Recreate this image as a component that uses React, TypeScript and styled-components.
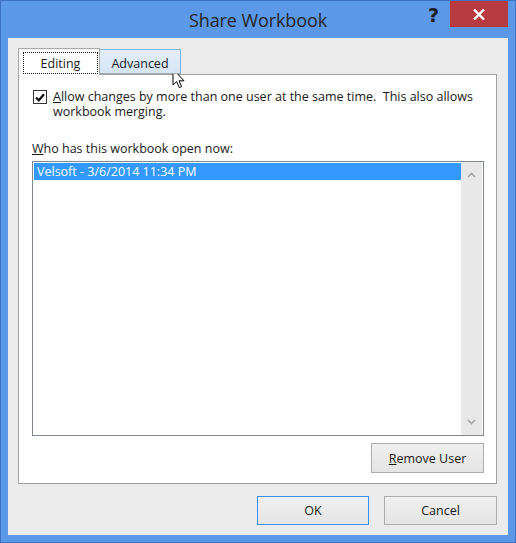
import React from "react";
import styled, { createGlobalStyle } from "styled-components";

const GlobalStyle = createGlobalStyle`
  html, body { margin: 0; padding: 0; background: #5b98e8; }
  body { font-family: "Open Sans", "Noto Sans", sans-serif; }
`;

const Window = styled.div`
  position: relative;
  width: 516px;
  height: 543px;
  box-sizing: border-box;
  background: #5b98e8;
  border: 1px solid #3e72c4;
  display: flex;
  flex-direction: column;
`;

const TitleBar = styled.div`
  position: relative;
  height: 37px;
  flex: none;
  display: flex;
  align-items: center;
  justify-content: center;
`;

const Title = styled.div`
  font-family: "Open Sans", sans-serif;
  font-size: 18px;
  color: #262626;
  letter-spacing: -0.1px;
`;

const Controls = styled.div`
  position: absolute;
  top: 0;
  right: 7px;
  display: flex;
  align-items: flex-start;
  gap: 11px;
`;

const HelpButton = styled.div`
  font-family: "DejaVu Sans", sans-serif;
  font-weight: bold;
  font-size: 19px;
  line-height: 1;
  color: #1e1e1e;
  margin-top: 5px;
`;

const CloseButton = styled.div`
  width: 58px;
  height: 26px;
  background: #b83b42;
  display: flex;
  align-items: center;
  justify-content: center;
`;

const Client = styled.div`
  flex: 1;
  margin: 0 7px 7px 7px;
  background: #ececec;
  padding: 9px 11px 0 10px;
  display: flex;
  flex-direction: column;
  font-size: 12.5px;
  color: #1a1a1a;
`;

const TabRow = styled.div`
  display: flex;
  align-items: flex-end;
  height: 27px;
  position: relative;
  z-index: 1;
`;

const Tab = styled.div<{ $active?: boolean; $hover?: boolean; $w: number }>`
  box-sizing: border-box;
  width: ${(p) => p.$w}px;
  height: ${(p) => (p.$active ? "27px" : "25px")};
  margin-bottom: ${(p) => (p.$active ? "-1px" : "0")};
  padding: ${(p) => (p.$active ? "0 0 0 4px" : "3px 0 0 0")};
  display: flex;
  align-items: ${(p) => (p.$active ? "flex-start" : "center")};
  justify-content: ${(p) => (p.$active ? "flex-start" : "center")};
  background: ${(p) =>
    p.$active ? "#ffffff" : p.$hover ? "linear-gradient(#e4eefa, #d5e5f7)" : "#f0f0f0"};
  border: 1px solid ${(p) => (p.$active ? "#a8a8a8" : p.$hover ? "#7eb4ea" : "#acacac")};
  border-bottom: ${(p) => (p.$active ? "none" : "1px solid #a8a8a8")};
  border-left: ${(p) => (p.$hover ? "none" : undefined)};
  color: #1a1a1a;
`;

const FocusRect = styled.div`
  box-sizing: border-box;
  border: 1px dotted #1a1a1a;
  width: 75px;
  height: 22px;
  margin-top: 3px;
  display: flex;
  align-items: center;
  justify-content: center;
`;

const Panel = styled.div`
  box-sizing: border-box;
  height: 410px;
  flex: none;
  background: #ffffff;
  border: 1px solid #a0a0a0;
  padding: 14px 12px 0 13px;
  display: flex;
  flex-direction: column;
`;

const CheckRow = styled.div`
  display: flex;
  align-items: flex-start;
  padding-left: 1px;
`;

const CheckBox = styled.div`
  flex: none;
  box-sizing: border-box;
  width: 14px;
  height: 14px;
  border: 1px solid #333333;
  background: #ffffff;
  display: flex;
  align-items: center;
  justify-content: center;
  margin-top: 1px;
`;

const CheckText = styled.div`
  margin-left: 6px;
  line-height: 15px;
  width: 428px;
  &::first-letter {
    text-decoration: underline;
  }
`;

const U = styled.span`
  text-decoration: underline;
  text-underline-offset: 1px;
`;

const ListLabel = styled.div`
  margin-top: 22px;
  line-height: 15px;
  &::first-letter {
    text-decoration: underline;
  }
`;

const ListBox = styled.div`
  box-sizing: border-box;
  flex: none;
  margin-top: 5px;
  height: 275px;
  border: 1px solid #828790;
  padding: 1px;
  display: flex;
`;

const ListItems = styled.div`
  flex: 1;
`;

const ListItem = styled.div<{ $selected?: boolean }>`
  height: 17px;
  line-height: 17px;
  padding-left: 3px;
  background: ${(p) => (p.$selected ? "#3399ff" : "transparent")};
  color: ${(p) => (p.$selected ? "#ffffff" : "#1a1a1a")};
`;

const ScrollBar = styled.div`
  width: 21px;
  margin: -1px 0;
  background: #e8e8e8;
  display: flex;
  flex-direction: column;
  justify-content: space-between;
  align-items: center;
  padding: 10px 0 10px;
`;

const ButtonRow = styled.div<{ $gap?: number }>`
  display: flex;
  justify-content: flex-end;
  gap: ${(p) => p.$gap ?? 0}px;
`;

const Button = styled.div<{ $default?: boolean; $w: number; $h: number }>`
  box-sizing: border-box;
  width: ${(p) => p.$w}px;
  height: ${(p) => p.$h}px;
  border: 1px solid ${(p) => (p.$default ? "#3c8ef0" : "#acacac")};
  background: linear-gradient(#f0f0f0, #e5e5e5);
  display: flex;
  align-items: center;
  justify-content: center;
  color: #1a1a1a;
`;

const Footer = styled(ButtonRow)`
  margin-top: 12px;
`;

const RemoveRow = styled(ButtonRow)`
  margin-top: 7px;
`;

const Cursor = styled.svg`
  position: absolute;
  left: 171px;
  top: 67px;
`;

export default function App() {
  return (
    <>
      <GlobalStyle />
      <Window>
        <TitleBar>
          <Title>Share Workbook</Title>
          <Controls>
            <HelpButton>?</HelpButton>
            <CloseButton>
              <svg width="12" height="11" viewBox="0 0 12 11">
                <path d="M1 0.5 L11 10.5 M11 0.5 L1 10.5" stroke="#ffffff" strokeWidth="2.4" />
              </svg>
            </CloseButton>
          </Controls>
        </TitleBar>
        <Client>
          <TabRow>
            <Tab $active $w={82}>
              <FocusRect>Editing</FocusRect>
            </Tab>
            <Tab $hover $w={81}>Advanced</Tab>
          </TabRow>
          <Panel>
            <CheckRow>
              <CheckBox>
                <svg width="10" height="9" viewBox="0 0 10 9">
                  <path d="M1 4.5 L3.8 7.3 L9 1.2" fill="none" stroke="#111" strokeWidth="2.2" />
                </svg>
              </CheckBox>
              <CheckText>
                Allow changes by more than one user at the same time.&nbsp; This also allows
                workbook merging.
              </CheckText>
            </CheckRow>
            <ListLabel>Who has this workbook open now:</ListLabel>
            <ListBox>
              <ListItems>
                <ListItem $selected>Velsoft - 3/6/2014 11:34 PM</ListItem>
              </ListItems>
              <ScrollBar>
                <svg width="9" height="6" viewBox="0 0 9 6">
                  <path d="M1 5 L4.5 1.5 L8 5" fill="none" stroke="#a6a6a6" strokeWidth="1.6" />
                </svg>
                <svg width="9" height="6" viewBox="0 0 9 6">
                  <path d="M1 1 L4.5 4.5 L8 1" fill="none" stroke="#a6a6a6" strokeWidth="1.6" />
                </svg>
              </ScrollBar>
            </ListBox>
            <RemoveRow>
              <Button $w={113} $h={30}>
                <span>
                  <U>R</U>emove User
                </span>
              </Button>
            </RemoveRow>
          </Panel>
          <Footer $gap={15}>
            <Button $default $w={112} $h={29}>OK</Button>
            <Button $w={113} $h={29}>Cancel</Button>
          </Footer>
        </Client>
        <Cursor width="14" height="21" viewBox="0 0 14 21">
          <path
            d="M1 1 L1 17 L4.6 13.6 L7.3 19.6 L9.6 18.6 L7 12.8 L12 12.8 Z"
            fill="#ffffff"
            stroke="#000000"
            strokeWidth="1"
            strokeLinejoin="miter"
          />
        </Cursor>
      </Window>
    </>
  );
}
